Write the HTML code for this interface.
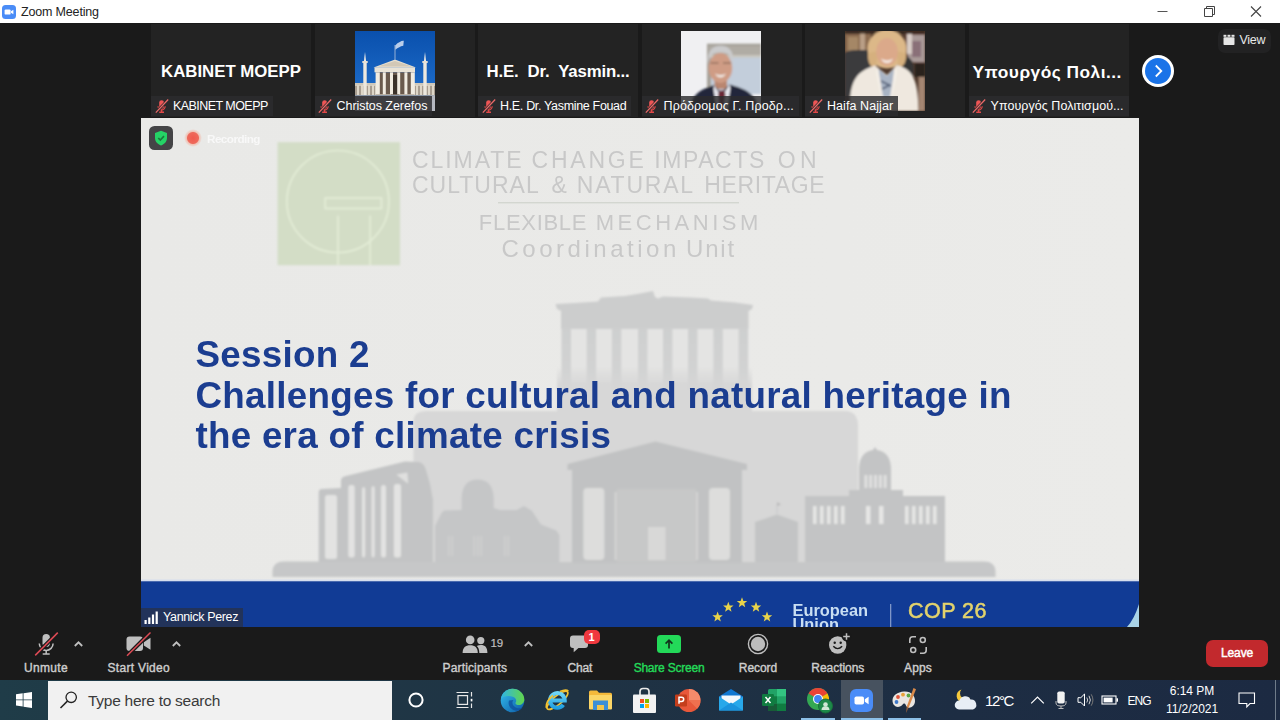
<!DOCTYPE html>
<html><head><meta charset="utf-8">
<style>
*{box-sizing:border-box;margin:0;padding:0}
html,body{width:1280px;height:720px;overflow:hidden;background:#1a1a1a;font-family:"Liberation Sans",sans-serif}
.abs{position:absolute}
#titlebar{left:0;top:0;width:1280px;height:23px;background:#fff}
#titlebar .t{left:21px;top:4.7px;font-size:12.5px;color:#222;white-space:nowrap;letter-spacing:-.17px}
.tile{top:23.5px;width:160px;height:93.5px;background:#232323;overflow:hidden}
.tile .big{left:0;width:160px;top:38.5px;text-align:center;color:#fff;font-weight:bold;font-size:16.8px;white-space:nowrap}
.tile .lab{left:0;top:72.5px;height:20.3px;background:rgba(44,44,46,.82);color:#fff;font-size:12.5px;line-height:20px;padding-left:22px;padding-right:5px;white-space:nowrap;letter-spacing:-.55px}
.tile .mic{left:3.5px;top:75px;width:14px;height:15px}
#share{left:141px;top:118.2px;width:998px;height:509px;background:#eaeae9;overflow:hidden}
.hd{color:#c8c8c8;white-space:nowrap;filter:blur(.5px)}
.ses{color:#1b3d90;font-weight:bold;font-size:36.8px;line-height:40.4px;letter-spacing:.27px;white-space:nowrap;filter:blur(.4px)}
#toolbar{left:0;top:627px;width:1280px;height:53px;background:#1a1a1a}
.tb{color:#d8d8d8;font-size:12px;-webkit-text-stroke:.38px;text-align:center;white-space:nowrap;top:34px;transform:translateX(-50%)}
#taskbar{left:0;top:680px;width:1280px;height:40px;background:linear-gradient(90deg,#1f3c48 0,#1f3b47 4%,#1f3344 45%,#1d2d43 75%,#1c2a42 100%)}
</style></head><body>
<div id="titlebar" class="abs">
  <svg class="abs" style="left:2.200px;top:4.500px" width="14" height="14" viewBox="0 0 14 14"><rect width="14" height="14" rx="3.5" fill="#4a8cf7"/><rect x="2.6" y="4.4" width="6" height="5.2" rx="1.2" fill="#fff"/><path d="M9 6.3 L11.4 4.8 V9.2 L9 7.7Z" fill="#fff"/></svg>
  <div class="abs t">Zoom Meeting</div>
  <svg class="abs" style="left:1150px;top:0" width="130" height="23" viewBox="0 0 130 23"><path d="M7.500 11.500 H17.500" stroke="#555" stroke-width="1"/><path d="M54.500 8.500 H62.500 V16.500 H54.500Z M56.500 8.500 V6.500 H64.500 V14.500 H62.500" stroke="#444" stroke-width="1" fill="none"/><path d="M101 6.500 L111 16.500 M111 6.500 L101 16.500" stroke="#444" stroke-width="1.100"/></svg>
</div>
<div class="abs" style="left:1218px;top:29px;width:53px;height:24px;border-radius:7px;background:#222223"></div>
<svg class="abs" style="left:1223px;top:34px" width="12" height="12" viewBox="0 0 12 12"><rect x="0.500" y="3.300" width="11" height="7.700" rx="0.800" fill="#e6e6e6"/><rect x="0.500" y="0.800" width="2.900" height="2" fill="#e6e6e6"/><rect x="4.500" y="0.800" width="2.900" height="2" fill="#e6e6e6"/><rect x="8.500" y="0.800" width="3" height="2" fill="#e6e6e6"/></svg>
<div class="abs" style="left:1239.500px;top:33px;font-size:12.500px;color:#e8e8e8;letter-spacing:-0.300px">View</div>
<div class="abs" style="left:1142px;top:55px;width:32px;height:32px;border-radius:50%;background:#fff"></div>
<div class="abs" style="left:1145px;top:58px;width:26px;height:26px;border-radius:50%;background:#1a73e8"></div>
<svg class="abs" style="left:1145px;top:58px" width="26" height="26" viewBox="0 0 26 26"><path d="M10.800 7.500 L16.300 13 L10.800 18.500" stroke="#fff" stroke-width="1.800" fill="none"/></svg>
<div id="tiles">
<div class="abs tile" style="left:151px"><div class="abs big">KABINET MOEPP</div><div class="abs lab" style="letter-spacing:-.55px">KABINET MOEPP</div><svg class="abs mic" viewBox="0 0 14 15"><rect x="4.2" y="1.2" width="4.8" height="8.6" rx="2.4" fill="#ee5555"/><path d="M3 7.3 a3.6 3.6 0 0 0 7.200 0" stroke="#e14848" stroke-width="1.2" fill="none"/><path d="M6.600 10.500 V13 M4.200 13.300 H9" stroke="#e14848" stroke-width="1.400"/><path d="M13 0.800 L1 13.600" stroke="#2b2b2c" stroke-width="2.800"/><path d="M13.200 0.500 L0.800 13.700" stroke="#ee6a6a" stroke-width="1.200"/></svg></div>
<div class="abs tile" style="left:314.5px"><svg class="abs" style="left:40.500px;top:7.500px" width="80" height="80" viewBox="0 0 80 80"><defs><linearGradient id="sky" x1="0" y1="0" x2="0" y2="1"><stop offset="0" stop-color="#0a50ad"/><stop offset="0.7" stop-color="#1b69c6"/><stop offset="1" stop-color="#3a7fd0"/></linearGradient><filter id="b1"><feGaussianBlur stdDeviation="0.55"/></filter></defs><rect width="80" height="80" fill="url(#sky)"/><g filter="url(#b1)">
<rect x="0" y="52" width="80" height="12.500" fill="#cfc8ba"/><rect x="0" y="55" width="20" height="9" fill="#a79d90"/><rect x="60" y="55" width="20" height="9" fill="#a79d90"/>
<g fill="#ddd6c8"><rect x="2" y="54" width="2" height="10"/><rect x="6" y="54" width="2" height="10"/><rect x="13" y="54" width="2" height="10"/><rect x="17" y="54" width="2" height="10"/><rect x="61" y="54" width="2" height="10"/><rect x="65" y="54" width="2" height="10"/><rect x="73" y="54" width="2" height="10"/><rect x="77" y="54" width="2" height="10"/></g>
<rect x="8.300" y="31" width="3.400" height="33" fill="#ece8df"/><path d="M8.800 31 L10 21 L11.200 31Z" fill="#f0ece6"/><rect x="7.300" y="30" width="5.400" height="2" fill="#e6e0d4"/>
<rect x="68.300" y="31" width="3.400" height="33" fill="#ece8df"/><path d="M68.800 31 L70 21 L71.200 31Z" fill="#f0ece6"/><rect x="67.300" y="30" width="5.400" height="2" fill="#e6e0d4"/>
<path d="M18.500 36.500 L40 28.500 L61 36.500Z" fill="#e6dfd0"/><path d="M23 35.500 L40 30 L57 35.500Z" fill="#d2c8b6"/>
<rect x="19.500" y="36.300" width="40.500" height="5" fill="#e9e3d6"/>
<rect x="21" y="41.300" width="38" height="22" fill="#6a5a4e"/><rect x="36" y="44" width="8" height="19.500" fill="#3b302a"/>
<g fill="#f1ece1"><rect x="20.600" y="41.300" width="4.200" height="22"/><rect x="27.800" y="41.300" width="3" height="22"/><rect x="35" y="41.300" width="3" height="22"/><rect x="42.200" y="41.300" width="3" height="22"/><rect x="49.400" y="41.300" width="3" height="22"/><rect x="55.800" y="41.300" width="4" height="22"/></g>
<path d="M40 28.500 V14" stroke="#cfd6e2" stroke-width="0.700"/><path d="M40.300 14.500 q2 -3 4.500 -3.500 q2 -1.500 4 -1.200 l-0.500 5 q-2.500 0 -4 1.500 q-2 0.500 -4 2.500Z" fill="#b9cdea"/>
<rect x="0" y="64.300" width="80" height="16" fill="#8f939b"/><rect x="75.600" y="64.300" width="4.400" height="16" fill="#b5b8c0"/></g></svg><div class="abs lab" style="letter-spacing:-.05px">Christos Zerefos</div><svg class="abs mic" viewBox="0 0 14 15"><rect x="4.2" y="1.2" width="4.8" height="8.6" rx="2.4" fill="#ee5555"/><path d="M3 7.3 a3.6 3.6 0 0 0 7.200 0" stroke="#e14848" stroke-width="1.2" fill="none"/><path d="M6.600 10.500 V13 M4.200 13.300 H9" stroke="#e14848" stroke-width="1.400"/><path d="M13 0.800 L1 13.600" stroke="#2b2b2c" stroke-width="2.800"/><path d="M13.200 0.500 L0.800 13.700" stroke="#ee6a6a" stroke-width="1.200"/></svg></div>
<div class="abs tile" style="left:478px"><div class="abs big"><span style="letter-spacing:-.15px">H.E.&nbsp; Dr.&nbsp; Yasmin...</span></div><div class="abs lab" style="letter-spacing:-.33px">H.E. Dr. Yasmine Fouad</div><svg class="abs mic" viewBox="0 0 14 15"><rect x="4.2" y="1.2" width="4.8" height="8.6" rx="2.4" fill="#ee5555"/><path d="M3 7.3 a3.6 3.6 0 0 0 7.200 0" stroke="#e14848" stroke-width="1.2" fill="none"/><path d="M6.600 10.500 V13 M4.200 13.300 H9" stroke="#e14848" stroke-width="1.400"/><path d="M13 0.800 L1 13.600" stroke="#2b2b2c" stroke-width="2.800"/><path d="M13.200 0.500 L0.800 13.700" stroke="#ee6a6a" stroke-width="1.200"/></svg></div>
<div class="abs tile" style="left:641.5px"><svg class="abs" style="left:39.500px;top:7.500px" width="80" height="80" viewBox="0 0 80 80"><defs><filter id="b2"><feGaussianBlur stdDeviation="0.9"/></filter></defs><rect width="80" height="80" fill="#f0f0f2"/><g filter="url(#b2)">
<rect x="26" y="12.700" width="54" height="50" fill="#a5a199"/><rect x="27.500" y="15" width="52.500" height="9" fill="#b0aca4"/><rect x="30" y="26" width="50" height="37" fill="#c3cedb"/><rect x="27" y="24" width="53" height="2.500" fill="#c9c6bd"/>
<rect x="33.500" y="46" width="12.500" height="12" fill="#b98670"/>
<ellipse cx="39.400" cy="37" rx="11.800" ry="15" fill="#cf9c85"/>
<path d="M27 34 C25.500 22 30 14.800 39.500 14.800 C49.500 14.800 53.500 22 52 34 C51.500 28 49.500 24.500 46 22.500 C42 21 37 21 33 22.500 C29.500 24.500 27.500 28 27 34Z" fill="#cbcbcc"/>
<path d="M34 42.500 q5.500 3 11 0 q-2 4 -5.500 4 q-3.500 0 -5.500 -4Z" fill="#f1e8e2"/>
<path d="M29.500 32 h8 M42 32 h8" stroke="#94705f" stroke-width="1.300"/>
<path d="M9 80 C10 64 18 59 33 54 L40 62 L48.500 53.500 C64 58 76 62 77.500 80Z" fill="#23283a"/>
<path d="M33 54 L40.500 66 L48.500 53.500 L49.500 57 L46 80 H36 L32.500 58Z" fill="#e9e9f0"/>
<path d="M38.500 59.500 h5 l1 4 l-2 16.500 h-4 l-1.500 -16.500Z" fill="#6b2535"/></g></svg><div class="abs lab" style="letter-spacing:.12px">Πρόδρομος Γ. Προδρ...</div><svg class="abs mic" viewBox="0 0 14 15"><rect x="4.2" y="1.2" width="4.8" height="8.6" rx="2.4" fill="#ee5555"/><path d="M3 7.3 a3.6 3.6 0 0 0 7.200 0" stroke="#e14848" stroke-width="1.2" fill="none"/><path d="M6.600 10.500 V13 M4.200 13.300 H9" stroke="#e14848" stroke-width="1.400"/><path d="M13 0.800 L1 13.600" stroke="#2b2b2c" stroke-width="2.800"/><path d="M13.200 0.500 L0.800 13.700" stroke="#ee6a6a" stroke-width="1.200"/></svg></div>
<div class="abs tile" style="left:805px"><svg class="abs" style="left:40px;top:7.500px" width="80" height="80" viewBox="0 0 80 80"><defs><filter id="b3"><feGaussianBlur stdDeviation="0.8"/></filter></defs><rect width="80" height="80" fill="#4f392c"/><g filter="url(#b3)">
<rect x="0" y="3" width="26" height="18" fill="#8a6a50"/><rect x="3" y="6" width="10" height="14" fill="#a58766"/><rect x="15" y="2" width="5" height="18" fill="#b99f86"/>
<rect x="60" y="2" width="20" height="30" fill="#6a4a3c"/><rect x="63" y="4" width="17" height="27" fill="#a99a98"/><rect x="67" y="10" width="9" height="16" fill="#8a6f78"/><rect x="62" y="3" width="5" height="20" fill="#d8ccc6"/>
<rect x="0" y="0" width="80" height="2.500" fill="#2e211b"/>
<path d="M0 22 Q2 19 12 19 H26 V66 H0Z" fill="#3b3b3d"/>
<path d="M55 24 Q66 24 68.500 34 V48 H55Z" fill="#343436"/>
<rect x="70" y="32" width="10" height="14" fill="#2b201c"/>
<ellipse cx="42" cy="18" rx="19.500" ry="19.500" fill="#dcb888"/><path d="M23 22 Q22 36 31 37 L33 20Z M61 22 Q62 35 54 37 L51 20Z" fill="#d6b07e"/>
<ellipse cx="42" cy="21" rx="10.800" ry="14" fill="#dba98a"/>
<path d="M36 27.500 q6 4 12 0 q-2 4.500 -6 4.500 q-4 0 -6 -4.500Z" fill="#f6ece6"/>
<path d="M4.500 80 C5 52 9 41 30 34.500 L42 44 L52 34 C69 39 73 50 73.500 80Z" fill="#efe8df"/>
<path d="M33 37 L36 66 L47 66 L49 37 L42 45Z" fill="#a9b4c4"/><path d="M36 50 l10 5 M37 58 l8 -4" stroke="#4a5670" stroke-width="1.500"/>
<path d="M33 36 L31 41 L36 66 L38 66Z M50 36 L52 41 L47 66 L45 66Z" fill="#f6f0e8"/>
<rect x="73.500" y="46" width="6.500" height="34" fill="#a48672"/></g></svg><div class="abs lab" style="letter-spacing:.07px">Haifa Najjar</div><svg class="abs mic" viewBox="0 0 14 15"><rect x="4.2" y="1.2" width="4.8" height="8.6" rx="2.4" fill="#ee5555"/><path d="M3 7.3 a3.6 3.6 0 0 0 7.200 0" stroke="#e14848" stroke-width="1.2" fill="none"/><path d="M6.600 10.500 V13 M4.200 13.300 H9" stroke="#e14848" stroke-width="1.400"/><path d="M13 0.800 L1 13.600" stroke="#2b2b2c" stroke-width="2.800"/><path d="M13.200 0.500 L0.800 13.700" stroke="#ee6a6a" stroke-width="1.200"/></svg></div>
<div class="abs tile" style="left:968.5px"><div class="abs big"><span style="font-size:17.3px;letter-spacing:.5px;position:relative;left:-1.3px">Υπουργός Πολι...</span></div><div class="abs lab" style="letter-spacing:.05px">Υπουργός Πολιτισμού...</div><svg class="abs mic" viewBox="0 0 14 15"><rect x="4.2" y="1.2" width="4.8" height="8.6" rx="2.4" fill="#ee5555"/><path d="M3 7.3 a3.6 3.6 0 0 0 7.200 0" stroke="#e14848" stroke-width="1.2" fill="none"/><path d="M6.600 10.500 V13 M4.200 13.300 H9" stroke="#e14848" stroke-width="1.400"/><path d="M13 0.800 L1 13.600" stroke="#2b2b2c" stroke-width="2.800"/><path d="M13.200 0.500 L0.800 13.700" stroke="#ee6a6a" stroke-width="1.200"/></svg></div>
</div>
<div id="share" class="abs">
<svg class="abs" style="left:0;top:0" width="998" height="509" viewBox="0 0 998 509">
<defs><filter id="bl"><feGaussianBlur stdDeviation="0.8"/></filter><filter id="bl2"><feGaussianBlur stdDeviation="0.9"/></filter>
<linearGradient id="pfade" gradientUnits="userSpaceOnUse" x1="0" y1="210" x2="0" y2="272"><stop offset="0" stop-color="#cecfcf"/><stop offset="0.6" stop-color="#d1d2d2"/><stop offset="1" stop-color="#d6d6d6"/></linearGradient>
<linearGradient id="rock" gradientUnits="userSpaceOnUse" x1="0" y1="248" x2="0" y2="295"><stop offset="0" stop-color="#d7d7d7" stop-opacity="0"/><stop offset="0.4" stop-color="#d7d7d7" stop-opacity="1"/><stop offset="1" stop-color="#d7d7d7"/></linearGradient>
<linearGradient id="bgl" x1="0" y1="0" x2="1" y2="0"><stop offset="0" stop-color="#e9e9e7"/><stop offset="0.7" stop-color="#eaeae8"/><stop offset="1" stop-color="#ebebe9"/></linearGradient>
</defs>
<rect width="998" height="509" fill="url(#bgl)"/>
<g filter="url(#bl)"><rect x="136.6" y="24.2" width="122.4" height="123" fill="#d3ddc6"/>
<circle cx="196.9" cy="83.5" r="51" fill="none" stroke="#e4edd7" stroke-width="1.7"/>
<rect x="184.2" y="80" width="56.2" height="10.5" fill="none" stroke="#e4edd7" stroke-width="1.7"/>
<path d="M197 97.5 V147 M229.2 97.5 V147" stroke="#e4edd7" stroke-width="1.7"/></g>
<rect x="357" y="84" width="241" height="1.4" fill="#d3d6d0"/>
<g filter="url(#bl2)">
<path d="M272.5 443 V302 Q273 293.5 285 293 H705 Q717 294 717 308 V443 Z" fill="#d7d7d7"/>
<rect x="420" y="210" width="187.5" height="60" fill="#e4e4e3"/>
<rect x="416" y="248" width="195" height="47" fill="url(#rock)"/>
<path d="M414.5 186 L434 185 L457 183.5 L460 179.5 L484 178 L499 175.5 L512 173 L514 179 L517 180.5 L522 178.5 L549 179.5 L567 180.5 L570 182.5 L594 184.5 L612 187 L611 191 L607.5 193 V211 H420 V193 L416 191 Z" fill="#cccdcd"/>
<rect x="420.6" y="210" width="9.4" height="62" fill="url(#pfade)"/>
<rect x="445.7" y="210" width="9.4" height="62" fill="url(#pfade)"/>
<rect x="470.9" y="210" width="9.4" height="62" fill="url(#pfade)"/>
<rect x="497" y="210" width="9.4" height="62" fill="url(#pfade)"/>
<rect x="522" y="210" width="9.4" height="62" fill="url(#pfade)"/>
<rect x="547" y="210" width="9.4" height="62" fill="url(#pfade)"/>
<rect x="572.4" y="210" width="9.4" height="62" fill="url(#pfade)"/>
<rect x="597.6" y="210" width="9.4" height="62" fill="url(#pfade)"/>
<path d="M131.5 459 V453 Q132 443.5 143 443.5 H843 Q854 443.5 854.5 453 V459 Z" fill="#c6c7c8"/>
<path d="M177.7 444 V374 Q178 371 181 371 L200 370 V362 Q200.5 359.3 203 358.6 L264 343.5 L278 344 Q283 345 285 352 L289 366 L292 382 V444 Z" fill="#c3c4c5"/>
<rect x="184" y="377" width="12" height="64" rx="2.5" fill="#e3e3e2"/>
<rect x="207.3" y="367" width="6.4" height="72.5" rx="2.5" fill="#e3e3e2"/>
<rect x="221" y="369" width="3.2" height="70.5" rx="2.5" fill="#e3e3e2"/>
<rect x="230.5" y="368" width="3.2" height="71.5" rx="2.5" fill="#e3e3e2"/>
<rect x="240" y="367" width="5" height="72.5" rx="2.5" fill="#e3e3e2"/>
<rect x="252.9" y="366" width="7.1" height="73.5" rx="2.5" fill="#e3e3e2"/>
<path d="M255.3 356.4 L266.4 354.6 L267.2 365.8 Z" fill="#e0e0df"/>
<path d="M294 445 V408 L300.5 395 L303 392.5 L320.6 392 V380 Q321.5 361.5 336.6 361.5 Q351.8 361.5 352.7 380 V390 L359 392 L375.6 392 L383 388 L390.9 392.8 L400 406.5 L415.3 412.6 L418.4 417 V445 Z" fill="#c5c6c7"/>
<rect x="307" y="418" width="1.6" height="20" fill="#d0d0d0"/>
<rect x="310.5" y="418" width="1.6" height="20" fill="#d0d0d0"/>
<rect x="332.5" y="418" width="1.6" height="20" fill="#d0d0d0"/>
<rect x="336" y="418" width="1.6" height="20" fill="#d0d0d0"/>
<rect x="339.5" y="418" width="1.6" height="20" fill="#d0d0d0"/>
<rect x="363" y="418" width="1.6" height="20" fill="#d0d0d0"/>
<rect x="366.5" y="418" width="1.6" height="20" fill="#d0d0d0"/>
<path d="M426.5 346 L514.5 323.5 L606 346 V352 H601 V445 H431 V352 H426.5 Z" fill="#c1c2c3"/>
<rect x="476" y="371" width="79" height="73" fill="#c7c8c8"/>
<rect x="442.3" y="370" width="21.1" height="72" rx="4" fill="#dddddc"/>
<rect x="568" y="370" width="21" height="72" rx="4" fill="#dddddc"/>
<rect x="473.8" y="374" width="1.6" height="68" fill="#d9d9d8"/>
<rect x="555.3" y="374" width="1.6" height="68" fill="#d9d9d8"/>
<rect x="507" y="409" width="17.5" height="33" fill="#d8d8d7"/>
<path d="M614 444 V404 L636 396.5 L657 404 V444 Z" fill="#c3c4c5"/>
<path d="M636 387 V396" stroke="#c3c4c5" stroke-width="0.8"/>
<path d="M636 384 L640 386.5 L636 388 Z" fill="#b8b8b9"/>
<path d="M664 444 V378 H708 V372 H718 V352 Q718 334 732 332 L734 329 L736 332 Q750 334 750 352 V372 H762 V378 H804 V444 Z" fill="#c3c4c5"/>
<rect x="672" y="388" width="3.6" height="18" fill="#e6e6e5"/>
<rect x="679" y="388" width="3.6" height="18" fill="#e6e6e5"/>
<rect x="686" y="388" width="3.6" height="18" fill="#e6e6e5"/>
<rect x="693" y="388" width="3.6" height="18" fill="#e6e6e5"/>
<rect x="700" y="388" width="3.6" height="18" fill="#e6e6e5"/>
<rect x="725" y="388" width="4.5" height="18" fill="#e6e6e5"/>
<rect x="738" y="388" width="4.5" height="18" fill="#e6e6e5"/>
<rect x="764" y="388" width="3.6" height="18" fill="#e6e6e5"/>
<rect x="771" y="388" width="3.6" height="18" fill="#e6e6e5"/>
<rect x="778" y="388" width="3.6" height="18" fill="#e6e6e5"/>
<rect x="785" y="388" width="3.6" height="18" fill="#e6e6e5"/>
<rect x="792" y="388" width="3.6" height="18" fill="#e6e6e5"/>
<rect x="723.5" y="357" width="2.8" height="13" fill="#e2e2e1"/>
<rect x="728.3" y="357" width="2.8" height="13" fill="#e2e2e1"/>
<rect x="733.1" y="357" width="2.8" height="13" fill="#e2e2e1"/>
<rect x="737.9" y="357" width="2.8" height="13" fill="#e2e2e1"/>
<rect x="742.7" y="357" width="2.8" height="13" fill="#e2e2e1"/>
</g>
<rect x="0" y="461.5" width="998" height="2.5" fill="#d6deee"/>
<rect x="0" y="463.3" width="998" height="50" fill="#113b95"/>
<path d="M985.5 509.5 Q993 502 998 486 V509.5Z" fill="#a9d3e6"/>
<polygon points="576.6,493.5 577.96,497.13 581.83,497.3 578.8,499.71 579.83,503.45 576.6,501.31 573.37,503.45 574.4,499.71 571.37,497.3 575.24,497.13" fill="#e8d34a"/>
<polygon points="587.3,483.8 588.66,487.43 592.53,487.6 589.5,490.01 590.53,493.75 587.3,491.61 584.07,493.75 585.1,490.01 582.07,487.6 585.94,487.43" fill="#e8d34a"/>
<polygon points="601.0,479.3 602.36,482.93 606.23,483.1 603.2,485.51 604.23,489.25 601.0,487.11 597.77,489.25 598.8,485.51 595.77,483.1 599.64,482.93" fill="#e8d34a"/>
<polygon points="615.0,483.8 616.36,487.43 620.23,487.6 617.2,490.01 618.23,493.75 615.0,491.61 611.77,493.75 612.8,490.01 609.77,487.6 613.64,487.43" fill="#e8d34a"/>
<polygon points="626.0,493.5 627.36,497.13 631.23,497.3 628.2,499.71 629.23,503.45 626.0,501.31 622.77,503.45 623.8,499.71 620.77,497.3 624.64,497.13" fill="#e8d34a"/>
<rect x="749" y="486" width="1.3" height="24" fill="#7f96c8"/>
</svg>
<div class="abs hd" style="left:271.0px;top:29.3px;font-size:23px;letter-spacing:1.93px">CLIMATE</div>
<div class="abs hd" style="left:390.5px;top:29.3px;font-size:23px;letter-spacing:2.8px">CHANGE</div>
<div class="abs hd" style="left:513.25px;top:29.3px;font-size:23px;letter-spacing:1.58px">IMPACTS</div>
<div class="abs hd" style="left:636.75px;top:29.3px;font-size:23px;letter-spacing:4.25px">ON</div>
<div class="abs hd" style="left:271.0px;top:54.3px;font-size:23px;letter-spacing:1.0px">CULTURAL</div>
<div class="abs hd" style="left:410.5px;top:54.3px;font-size:23px;letter-spacing:0.0px">&amp;</div>
<div class="abs hd" style="left:435.75px;top:54.3px;font-size:23px;letter-spacing:1.79px">NATURAL</div>
<div class="abs hd" style="left:563.25px;top:54.3px;font-size:23px;letter-spacing:0.64px">HERITAGE</div>
<div class="abs hd" style="left:337.8px;top:92.2px;font-size:22px;letter-spacing:0.71px">FLEXIBLE</div>
<div class="abs hd" style="left:454.8px;top:92.2px;font-size:22px;letter-spacing:3.5px">MECHANISM</div>
<div class="abs hd" style="left:360.4px;top:117.3px;font-size:24px;letter-spacing:3.53px">Coordination</div>
<div class="abs hd" style="left:545.0px;top:117.3px;font-size:24px;letter-spacing:1.83px">Unit</div>
<div class="abs ses" style="left:54.4px;top:217.25px">Session 2<br>Challenges for cultural and natural heritage in<br>the era of climate crisis</div>
<div class="abs" style="left:651.5px;top:484.5px;font-size:16.4px;line-height:14.6px;font-weight:bold;color:#c9def2;letter-spacing:0px;filter:blur(.3px)">European<br>Union</div>
<div class="abs" style="left:767px;top:480.4px;font-size:21.500px;color:#e3d36c;letter-spacing:0.45px;-webkit-text-stroke:.55px #e3d36c;white-space:nowrap;filter:blur(.3px)">COP 26</div>
<svg class="abs" style="left:8.400px;top:8.200px" width="24" height="24" viewBox="0 0 24 24"><rect width="24" height="24" rx="5.500" fill="#444446"/><path d="M12 4.800 L18 7 V12 C18 15.800 15.200 18.200 12 19.500 C8.800 18.200 6 15.800 6 12 V7Z" fill="#25d366"/><path d="M9.300 12 L11.300 14 L15 10.200" stroke="#1c7a3c" stroke-width="1.700" fill="none"/></svg>
<div class="abs" style="left:43.25px;top:11px;width:18px;height:18px;border-radius:50%;background:radial-gradient(circle,#f05a4e 0,#ee6a5c 5.500px,rgba(245,170,150,.6) 6.500px,rgba(240,200,190,0) 9px)"></div>
<div class="abs" style="left:66px;top:14.3px;font-size:11.700px;color:#f8f8f8;font-weight:bold;letter-spacing:-0.55px;filter:blur(.4px)">Recording</div>
<div class="abs" style="left:0;top:490px;width:102px;height:19px;background:#22335a"></div>
<svg class="abs" style="left:3px;top:493px" width="15" height="13" viewBox="0 0 15 13"><rect x="0.500" y="9" width="2.200" height="4" fill="#fff"/><rect x="4.200" y="6.500" width="2.200" height="6.500" fill="#fff"/><rect x="7.900" y="3.500" width="2.200" height="9.500" fill="#fff"/><rect x="11.600" y="0.500" width="2.200" height="12.500" fill="#fff"/></svg>
<div class="abs" style="left:22px;top:492px;font-size:12.500px;color:#fff;letter-spacing:-0.35px;white-space:nowrap">Yannick Perez</div>
</div>
<div id="toolbar" class="abs">
<svg class="abs" style="left:33px;top:4px" width="28" height="27" viewBox="0 0 28 27">
<rect x="9.500" y="3" width="7.400" height="13" rx="3.700" fill="#bfbfbf"/>
<path d="M6.300 12.500 a6.900 6.900 0 0 0 13.800 0" stroke="#bfbfbf" stroke-width="1.500" fill="none"/>
<path d="M13.200 19.500 V22.500 M9.700 23 H16.700" stroke="#bfbfbf" stroke-width="1.500"/>
<path d="M24.800 1.600 L2.200 24.400" stroke="#1a1a1a" stroke-width="4"/>
<path d="M24.800 1.600 L2.200 24.400" stroke="#dd4b55" stroke-width="1.500"/></svg>
<svg class="abs" style="left:73.5px;top:14px" width="9" height="6" viewBox="0 0 9 6"><path d="M0.800 5 L4.500 1.300 L8.200 5" stroke="#bfbfbf" stroke-width="1.800" fill="none"/></svg>
<svg class="abs" style="left:171.5px;top:14px" width="9" height="6" viewBox="0 0 9 6"><path d="M0.800 5 L4.500 1.300 L8.200 5" stroke="#bfbfbf" stroke-width="1.800" fill="none"/></svg>
<svg class="abs" style="left:523.5px;top:14px" width="9" height="6" viewBox="0 0 9 6"><path d="M0.800 5 L4.500 1.300 L8.200 5" stroke="#bfbfbf" stroke-width="1.800" fill="none"/></svg>
<svg class="abs" style="left:122px;top:4px" width="32" height="27" viewBox="0 0 32 27">
<rect x="4.500" y="5.500" width="16.500" height="14.500" rx="3" fill="#bfbfbf"/>
<path d="M21.800 11.200 L28.500 6.800 V18.800 L21.800 14.400Z" fill="#bfbfbf"/>
<path d="M28.500 1.500 L5 24.800" stroke="#1a1a1a" stroke-width="4"/>
<path d="M28.500 1.500 L5 24.800" stroke="#dd4b55" stroke-width="1.500"/></svg>
<svg class="abs" style="left:461px;top:7px" width="28" height="20" viewBox="0 0 28 20">
<circle cx="9.200" cy="5.900" r="4.300" fill="#bfbfbf"/><path d="M1.600 19 C1.600 13.500 4.500 11.200 9.200 11.200 C13.900 11.200 16.800 13.500 16.800 19Z" fill="#bfbfbf"/>
<circle cx="19.800" cy="6.600" r="3.600" fill="#bfbfbf"/><path d="M18.300 19 C18.300 15.500 17.500 13.500 15.800 12 C17 11.300 18.300 11 19.800 11 C24 11 26.400 13.300 26.400 19Z" fill="#bfbfbf"/></svg>
<div class="abs" style="left:490.500px;top:10px;font-size:11.500px;color:#bfbfbf;letter-spacing:-0.2px;-webkit-text-stroke:.2px #bfbfbf">19</div>
<svg class="abs" style="left:568px;top:7px" width="24" height="20" viewBox="0 0 24 20">
<path d="M5 1.500 h12 q3 0 3 3 v6.500 q0 3 -3 3 h-6.500 l-4.800 4.300 v-4.300 h-0.700 q-3 0 -3 -3 v-6.500 q0 -3 3 -3Z" fill="#bfbfbf"/></svg>
<div class="abs" style="left:583.500px;top:2.5px;width:16px;height:14.500px;border-radius:5px;background:#f0383e;color:#fff;font-size:11px;font-weight:bold;text-align:center;line-height:14.500px">1</div>
<svg class="abs" style="left:657px;top:8px" width="24" height="18" viewBox="0 0 24 18"><rect width="24" height="18" rx="3.500" fill="#23d959"/><path d="M12 13.500 V5.500 M8.600 8.600 L12 5.200 L15.400 8.600" stroke="#12331c" stroke-width="1.700" fill="none"/></svg>
<svg class="abs" style="left:747px;top:6px" width="22" height="22" viewBox="0 0 22 22"><circle cx="11" cy="11" r="9.600" fill="none" stroke="#bfbfbf" stroke-width="1.400"/><circle cx="11" cy="11" r="7.200" fill="#bcbcbc"/></svg>
<svg class="abs" style="left:827px;top:4px" width="26" height="26" viewBox="0 0 26 26"><circle cx="10.700" cy="14" r="8.700" fill="#bfbfbf"/><circle cx="7.700" cy="11.700" r="1.200" fill="#1a1a1a"/><circle cx="13.700" cy="11.700" r="1.200" fill="#1a1a1a"/><path d="M6.300 15.300 q4.400 4.600 8.800 0" stroke="#1a1a1a" stroke-width="1.400" fill="none"/><circle cx="19.500" cy="5.500" r="4.800" fill="#1a1a1a"/><path d="M19.500 2.200 V8.800 M16.200 5.500 H22.800" stroke="#bfbfbf" stroke-width="1.500"/></svg>
<svg class="abs" style="left:908px;top:8px" width="20" height="20" viewBox="0 0 20 20"><path d="M1.800 8 V4.800 q0 -3 3 -3 H8 M18.200 12 V15.200 q0 3 -3 3 H12" stroke="#bfbfbf" stroke-width="1.600" fill="none"/><circle cx="14.800" cy="5" r="2.500" fill="none" stroke="#bfbfbf" stroke-width="1.600"/><circle cx="5.200" cy="15" r="2.500" fill="none" stroke="#bfbfbf" stroke-width="1.600"/></svg>
<div class="abs tb" style="left:46px;color:#cecece;letter-spacing:0.37px">Unmute</div>
<div class="abs tb" style="left:138.8px;color:#cecece;letter-spacing:0.3px">Start Video</div>
<div class="abs tb" style="left:474.8px;color:#cecece;letter-spacing:0.15px">Participants</div>
<div class="abs tb" style="left:579.8px;color:#cecece;letter-spacing:-0.21px">Chat</div>
<div class="abs tb" style="left:669px;color:#23d959;letter-spacing:-0.22px">Share Screen</div>
<div class="abs tb" style="left:758px;color:#cecece;letter-spacing:-0.07px">Record</div>
<div class="abs tb" style="left:837.8px;color:#cecece;letter-spacing:-0.04px">Reactions</div>
<div class="abs tb" style="left:918px;color:#cecece;letter-spacing:0.1px">Apps</div>
<div class="abs" style="left:1206px;top:12.5px;width:62px;height:27px;border-radius:7px;background:#c2292d;color:#fff;font-size:12px;line-height:27px;text-align:center;letter-spacing:-0.09px;-webkit-text-stroke:.45px #fff">Leave</div>
</div>
<div id="taskbar" class="abs">
<div class="abs" style="left:48px;top:1px;width:344px;height:39px;background:#f1f1f1"></div>
<svg class="abs" style="left:16px;top:11.500px" width="16" height="16" viewBox="0 0 16 16"><path d="M0 2.300 L6.700 1.300 V7.500 H0Z M7.500 1.200 L16 0 V7.500 H7.500Z M0 8.300 H6.700 V14.600 L0 13.600Z M7.500 8.300 H16 V16 L7.500 14.700Z" fill="#fff"/></svg>
<svg class="abs" style="left:59px;top:10px" width="20" height="20" viewBox="0 0 20 20"><circle cx="12.200" cy="7.300" r="5.200" fill="none" stroke="#222" stroke-width="1.300"/><path d="M8.400 11.100 L1.500 18" stroke="#222" stroke-width="1.500"/></svg>
<div class="abs" style="left:88px;top:11.500px;font-size:15.500px;color:#3a3a3a;white-space:nowrap;letter-spacing:-0.26px">Type here to search</div>
<svg class="abs" style="left:407px;top:11px" width="18" height="18" viewBox="0 0 18 18"><circle cx="9" cy="9" r="6.600" fill="none" stroke="#fff" stroke-width="2"/></svg>
<svg class="abs" style="left:455px;top:11px" width="20" height="18" viewBox="0 0 20 18"><g stroke="#e8e8e8" stroke-width="1.200" fill="none"><rect x="3" y="4.600" width="9.500" height="8.800"/><path d="M1.500 1.500 H13.500 M1.500 16.500 H13.500 M16.500 1 V5.500 M16.500 12.500 V17"/></g><rect x="15.700" y="7.800" width="1.700" height="2.600" fill="#fff"/></svg>
<svg class="abs" style="left:500px;top:8px" width="25" height="25" viewBox="0 0 25 25"><defs><linearGradient id="eg1" x1="0" y1="0" x2="1" y2="1"><stop offset="0" stop-color="#35c1f1"/><stop offset="1" stop-color="#0c59a4"/></linearGradient><linearGradient id="eg2" x1="0" y1="0" x2="1" y2="0"><stop offset="0" stop-color="#2fb5e6"/><stop offset="1" stop-color="#62d64a"/></linearGradient></defs><circle cx="12.500" cy="12.500" r="11.800" fill="url(#eg1)"/><path d="M1 11 C2 4 8 0.700 12.500 0.700 C19 0.700 24.300 5.500 24.300 11.500 C24.300 15 21.500 17 18.800 17 C16.500 17 15 16 15.600 14.600 C16.600 13 16.500 10.500 13.500 9 C9 7 3 8 1 11Z" fill="url(#eg2)"/><path d="M9 12.500 C7.500 17 10.500 22 16 22.800 C19 23 21.500 21.500 22.800 19.500 C20 21 16 20.500 13.800 18 C12 16 12 13.500 13.500 12 Z" fill="#0d4f9e" opacity=".75"/></svg>
<svg class="abs" style="left:543px;top:7px" width="28" height="27" viewBox="0 0 28 27"><defs><linearGradient id="ieg" x1="0" y1="0" x2="0" y2="1"><stop offset="0" stop-color="#6fd6f8"/><stop offset="1" stop-color="#1f9fe0"/></linearGradient></defs><ellipse cx="14.400" cy="13.300" rx="13.200" ry="4.300" transform="rotate(-40 14.400 13.300)" fill="none" stroke="#f3c232" stroke-width="1.700"/><path d="M20.300 17.900 A7.400 7.400 0 1 1 21.800 13.600 H8.500" fill="none" stroke="url(#ieg)" stroke-width="4"/><path d="M3.200 20.800 Q2.800 14 10 8.500" fill="none" stroke="#f3c232" stroke-width="1.700"/><path d="M17 4.600 Q23 1.800 25.300 4.200" fill="none" stroke="#f3c232" stroke-width="1.700"/></svg>
<svg class="abs" style="left:588px;top:9px" width="25" height="23" viewBox="0 0 25 23"><path d="M1 3 q0 -1.500 1.500 -1.500 h6.500 l2 2.200 h11.500 q1.500 0 1.500 1.500 v14 h-23Z" fill="#f4b93a"/><rect x="1" y="6" width="23" height="14.500" rx="1" fill="#fbd667"/><rect x="5" y="11.500" width="15" height="9.500" fill="#3c8fd6"/><rect x="9" y="16" width="7" height="5" fill="#f4c64c"/></svg>
<svg class="abs" style="left:632px;top:6px" width="25" height="28" viewBox="0 0 25 28"><path d="M8 9 V5.500 q0 -3 3 -3 h3 q3 0 3 3 V9" stroke="#e9e9e9" stroke-width="1.700" fill="none"/><rect x="1" y="8.500" width="23" height="18.500" rx="1" fill="#f2f2f2"/><rect x="8" y="13" width="4" height="4" fill="#f25022"/><rect x="13" y="13" width="4" height="4" fill="#7fba00"/><rect x="8" y="18" width="4" height="4" fill="#00a4ef"/><rect x="13" y="18" width="4" height="4" fill="#ffb900"/></svg>
<svg class="abs" style="left:674px;top:8px" width="27" height="25" viewBox="0 0 27 25"><circle cx="15" cy="12.500" r="11.500" fill="#e8583a"/><path d="M15 1 a11.500 11.500 0 0 1 11.500 11.500 h-11.500Z" fill="#f58b6b"/><path d="M15 12.500 h11.500 a11.500 11.500 0 0 1 -3.400 8.200Z" fill="#f0704f" /><rect x="1" y="6.500" width="12" height="12" rx="1.200" fill="#c43e1c"/><path d="M5 15.800 V9.300 h2.500 q2.200 0 2.200 2 q0 2.100 -2.200 2.100 H5" stroke="#fff" stroke-width="1.500" fill="none"/></svg>
<svg class="abs" style="left:718px;top:8px" width="26" height="24" viewBox="0 0 26 24"><path d="M1 8.500 L13 1 L25 8.500 V22 H1Z" fill="#1177d1"/><path d="M3.500 7.500 H22.500 V16 H3.500Z" fill="#f4f8fc"/><path d="M1 8.500 L13 16.500 L25 8.500 V22.500 H1Z" fill="#28a8ea"/><path d="M1 22.500 L13 14.500 L25 22.500Z" fill="#1b93dd"/></svg>
<svg class="abs" style="left:761px;top:8px" width="26" height="24" viewBox="0 0 26 24"><rect x="7" y="1" width="18" height="22" rx="1.500" fill="#21a366"/><rect x="16" y="1" width="9" height="7.300" fill="#33c481"/><rect x="7" y="8.300" width="9" height="7.300" fill="#107c41"/><rect x="16" y="15.600" width="9" height="7.400" fill="#107c41"/><rect x="7" y="15.600" width="9" height="7.400" fill="#185c37"/><rect x="1" y="6" width="12" height="12" rx="1.200" fill="#107c41"/><path d="M4.500 9 L9.500 15 M9.500 9 L4.500 15" stroke="#fff" stroke-width="1.500"/></svg>
<svg class="abs" style="left:806px;top:7px" width="28" height="27" viewBox="0 0 28 27"><circle cx="12" cy="12" r="11" fill="#34a853"/><path d="M12 12 L2.500 6.500 A11 11 0 0 1 21.500 6.500Z" fill="#ea4335"/><path d="M12 12 L21.500 6.500 A11 11 0 0 1 17.500 21.500 Z" fill="#fbbc05"/><circle cx="12" cy="12" r="5" fill="#fff"/><circle cx="12" cy="12" r="3.900" fill="#4285f4"/><circle cx="19.500" cy="19" r="7" fill="#1d8a4a" stroke="#1a6e3c" stroke-width="1"/><circle cx="19.500" cy="17.500" r="2.300" fill="#cfe8d5"/><path d="M15.500 23 q0 -3.800 4 -3.800 q4 0 4 3.800Z" fill="#cfe8d5"/></svg>
<div class="abs" style="left:841px;top:0;width:41.500px;height:40px;background:#47525f"></div>
<svg class="abs" style="left:849.500px;top:8.500px" width="23" height="23" viewBox="0 0 23 23"><rect width="23" height="23" rx="6" fill="#4a8cf7"/><rect x="4.500" y="7.500" width="9.500" height="8" rx="1.800" fill="#fff"/><path d="M14.800 10.300 L18.600 7.800 V15.200 L14.800 12.700Z" fill="#fff"/></svg>
<svg class="abs" style="left:891px;top:6px" width="27" height="28" viewBox="0 0 27 28"><path d="M13 5.500 C20 5 24.500 10 24 15.500 C23.500 20.500 19 22.800 16.500 21.200 C14.500 20 14.800 18 13.500 17.500 C12 17 11.500 19.500 9 20.500 C5 22 1.500 19 1.500 14.500 C1.500 9.500 6.500 6 13 5.500Z" fill="#e9e6e2"/><circle cx="7" cy="11" r="1.900" fill="#e0533a"/><circle cx="12" cy="8.700" r="1.900" fill="#e9a23a"/><circle cx="17.500" cy="9.500" r="1.900" fill="#5aa845"/><circle cx="5.500" cy="16" r="1.900" fill="#3f78c8"/><path d="M22.500 2 L25 3.200 L17.500 22 L15.600 21Z" fill="#d98a4a"/><path d="M15.600 21 L17.500 22 L15 27 Z" fill="#8a5a3a"/></svg>
<div class="abs" style="left:801px;top:38px;width:34px;height:2px;background:#8cc0e8"></div>
<div class="abs" style="left:841px;top:38px;width:41.5px;height:2px;background:#8cc0e8"></div>
<div class="abs" style="left:888px;top:38px;width:33px;height:2px;background:#8cc0e8"></div>
<svg class="abs" style="left:952px;top:8px" width="28" height="24" viewBox="0 0 28 24"><path d="M9.500 1.500 a6.500 6.500 0 1 0 8 7.500 a5.200 5.200 0 0 1 -8 -7.500Z" fill="#f6c93c"/><path d="M7 21.500 a4.500 4.500 0 0 1 0.500 -9 a6 6 0 0 1 11 -1 a5.200 5.200 0 0 1 2.500 10Z" fill="#e8eef5"/></svg>
<div class="abs" style="left:985px;top:11.500px;font-size:15px;color:#fff;white-space:nowrap;letter-spacing:-1.4px">12°C</div>
<svg class="abs" style="left:1030px;top:15px" width="15" height="10" viewBox="0 0 15 10"><path d="M1.200 8.300 L7.500 2 L13.800 8.300" stroke="#fff" stroke-width="1.200" fill="none"/></svg>
<svg class="abs" style="left:1055px;top:10px" width="12" height="20" viewBox="0 0 12 20"><rect x="2.300" y="1.500" width="7.400" height="12" rx="1.800" fill="#f2f2f2"/><path d="M1 11 v2 q0 3 5 3 q5 0 5 -3 v-2" stroke="#bbb" stroke-width="1" fill="none"/><path d="M6 16 V18 M3.500 18.500 H8.500" stroke="#bbb" stroke-width="1"/></svg>
<svg class="abs" style="left:1077px;top:12px" width="17" height="16" viewBox="0 0 17 16"><path d="M1 5.700 H3.800 L7.500 2 V14 L3.800 10.300 H1Z" stroke="#fff" stroke-width="1" fill="none"/><path d="M9.800 5.500 q1.700 2.500 0 5 M12 3.800 q2.800 4.200 0 8.400" stroke="#ccc" stroke-width="1" fill="none"/><path d="M14.200 2.300 q3.500 5.700 0 11.400" stroke="#777" stroke-width="1" fill="none"/></svg>
<svg class="abs" style="left:1101px;top:14px" width="18" height="12" viewBox="0 0 18 12"><rect x="1" y="2" width="14" height="8" fill="none" stroke="#fff" stroke-width="1.100"/><rect x="2.600" y="3.600" width="9" height="4.800" fill="#fff"/><rect x="15.500" y="4.300" width="1.500" height="3.400" fill="#fff"/></svg>
<div class="abs" style="left:1127.500px;top:13.500px;font-size:12px;color:#fff;white-space:nowrap;letter-spacing:-0.95px">ENG</div>
<div class="abs" style="left:1151px;top:2px;width:82px;text-align:center;font-size:12px;color:#fff;white-space:nowrap;letter-spacing:-0.05px;line-height:18.300px">6:14 PM<br>11/2/2021</div>
<svg class="abs" style="left:1238px;top:12px" width="18" height="17" viewBox="0 0 18 17"><path d="M1 1 H16.500 V11.500 H12 L8.800 14.800 V11.500 H1Z" stroke="#fff" stroke-width="1.100" fill="none"/></svg>
<div class="abs" style="left:1275px;top:0;width:1px;height:40px;background:#6f7c8a"></div>
</div>
</body></html>
